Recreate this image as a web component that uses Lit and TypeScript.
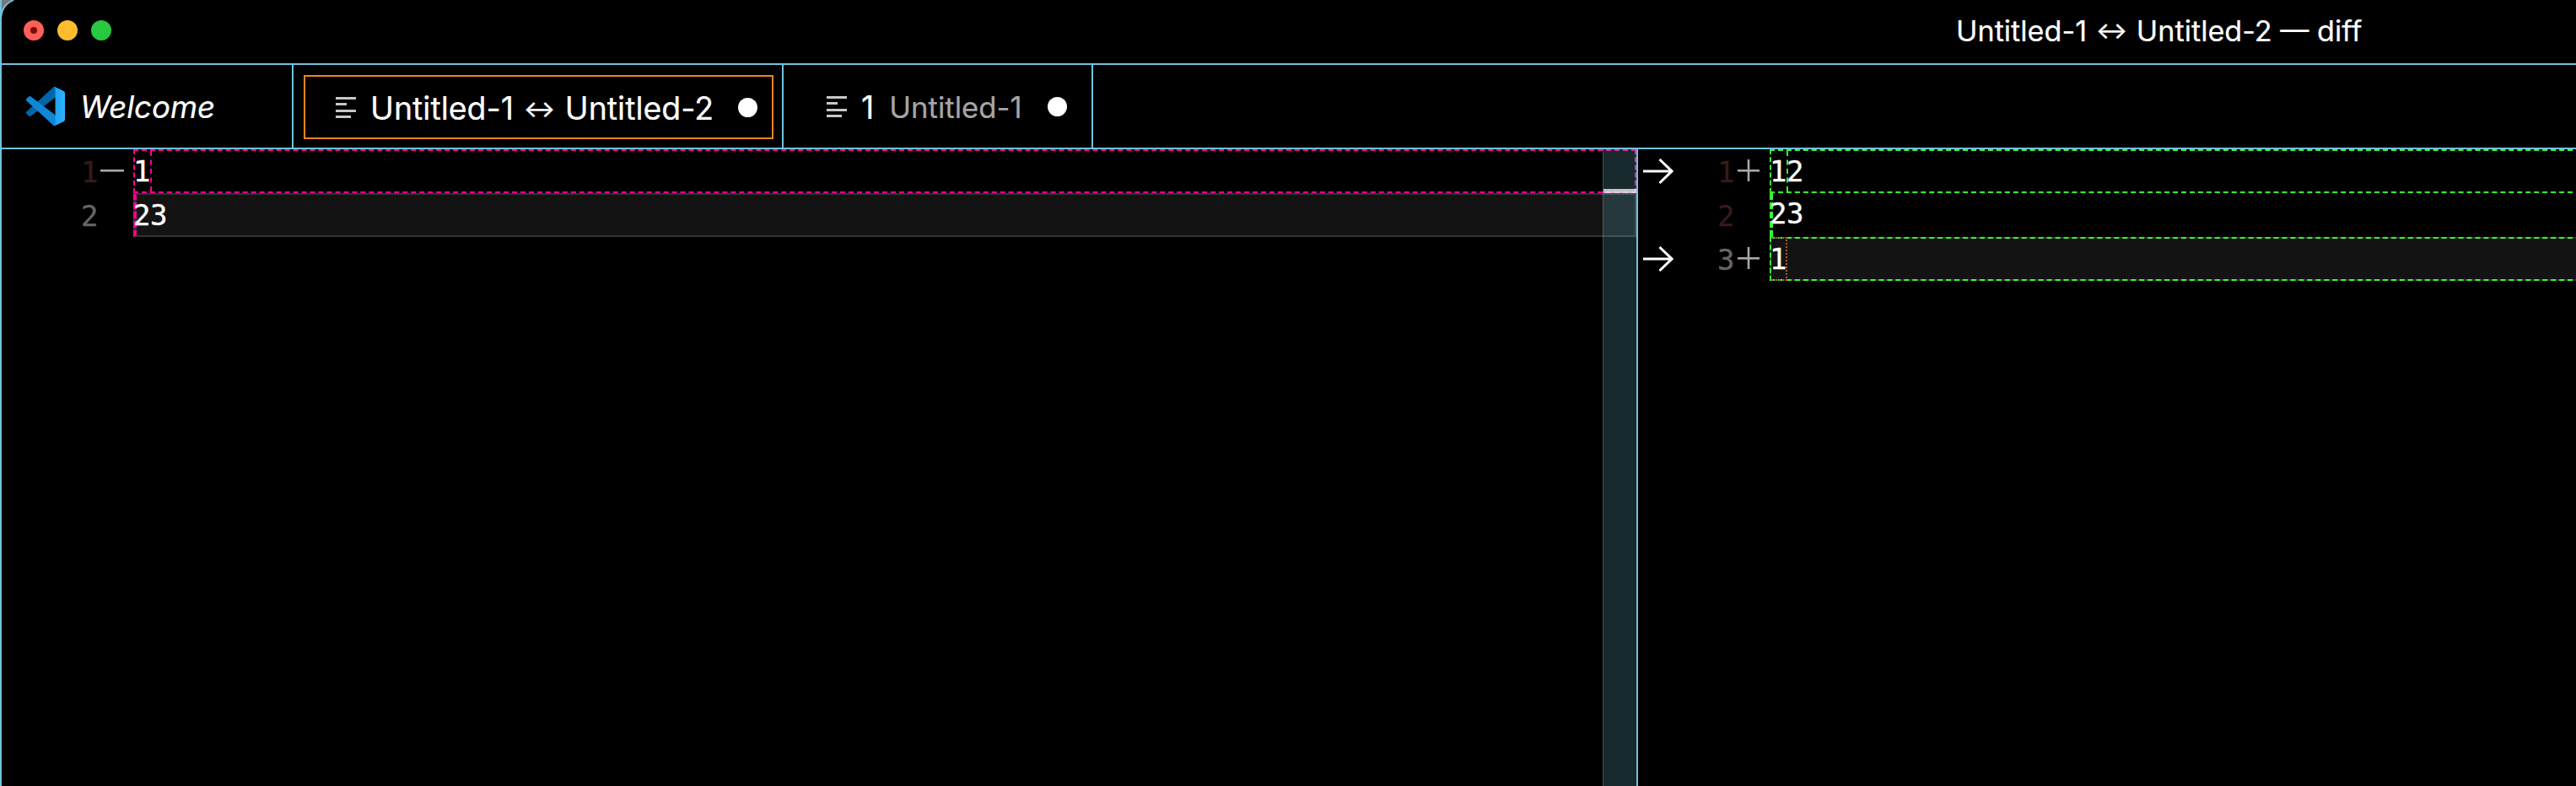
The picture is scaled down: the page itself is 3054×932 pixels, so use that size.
import { LitElement, html, css } from "lit";
import { customElement } from "lit/decorators.js";

const fileIcon = html`<svg class="file" width="24" height="26" viewBox="0 0 24 26" fill="#c8c8c8">
  <rect x="0" y="1" width="24" height="3"></rect>
  <rect x="0" y="8" width="13" height="3"></rect>
  <rect x="0" y="16" width="24" height="3"></rect>
  <rect x="0" y="23" width="18" height="3"></rect>
</svg>`;

const arrow = html`<svg class="arrow" width="36" height="30" viewBox="0 0 36 30" fill="none" stroke="#fff" stroke-width="3">
  <path d="M0 15H34M19.5 1L34 15L19.5 29"></path>
</svg>`;

const minus = html`<svg class="sign" width="28" height="28" viewBox="0 0 28 28"><rect x="0" y="13" width="28" height="2.6" fill="#a8a8a8"></rect></svg>`;
const plus = html`<svg class="sign" width="28" height="28" viewBox="0 0 28 28" fill="#a8a8a8"><rect x="1" y="13" width="26" height="2.6"></rect><rect x="12.7" y="1" width="2.6" height="26"></rect></svg>`;

@customElement("app-root")
export class AppRoot extends LitElement {
  static styles = css`
    :host { display: block; width: 3054px; height: 932px; background: #000; overflow: hidden; }
    .window { position: relative; width: 3054px; height: 932px; background: #000; border-left: 2px solid #6fc3df; box-sizing: border-box; display: flex; flex-direction: column; color: #fff; overflow: hidden; }
    .corner { position: absolute; left: -2px; top: 0; }

    .titlebar { height: 77px; flex: none; box-sizing: border-box; border-bottom: 2px solid #6fc3df; display: flex; align-items: center; padding-left: 26px; }
    .lights { display: flex; gap: 16px; width: 2291px; flex: none; padding-bottom: 3px; }
    .light { width: 24px; height: 24px; border-radius: 50%; display: flex; align-items: center; justify-content: center; }
    .red { background: #ff5f57; }
    .red i { width: 8px; height: 8px; border-radius: 50%; background: #7d0a06; }
    .yellow { background: #febc2e; }
    .green { background: #28c840; }
    .title { font: 34.2px/1 Inter, sans-serif; white-space: nowrap; padding-bottom: 1px; -webkit-text-stroke: 0.2px #fff; }
    .lr { font-size: 28px; font-weight: 500; margin: 0 1px; vertical-align: 3px; }

    .tabs { height: 100px; flex: none; box-sizing: border-box; border-bottom: 2px solid #6fc3df; display: flex; align-items: stretch; font-family: Inter, sans-serif; -webkit-text-stroke: 0.2px currentColor; }
    .tab { box-sizing: border-box; border-right: 2px solid #6fc3df; display: flex; align-items: center; white-space: nowrap; font-size: 37.5px; }
    .welcome { width: 346px; padding-left: 29px; gap: 18px; font-style: italic; font-size: 36.6px; }
    .t2 { width: 581px; padding: 12px 10px 10px 12px; }
    .inner { flex: 1; height: 76px; box-sizing: border-box; border: 2px solid #f38518; display: flex; align-items: center; padding: 0 17px 0 36px; }
    .t3 { width: 367px; padding: 0 29px 0 51px; }
    .file { flex: none; margin-right: 17px; }
    .name { line-height: 1; padding-top: 3px; }
    .desc { font-size: 34.7px; color: #a6a6a6; margin-left: 18px; line-height: 1; padding-top: 3px; }
    .dot { width: 23px; height: 23px; border-radius: 50%; background: #fff; margin-left: auto; flex: none; }

    .editors { flex: 1; display: flex; min-height: 0; font: 34px/48px "DejaVu Sans Mono", monospace; letter-spacing: -0.47px; -webkit-text-stroke: 0.35px currentColor; }
    .pane { position: relative; display: flex; flex-direction: column; }
    .left { flex: none; box-sizing: border-box; border-right: 2px solid #6fc3df; width: 1940px; }
    .right { flex: 1; min-width: 0; }
    .row { display: flex; height: 52px; flex: none; }
    .gutter { flex: none; display: flex; align-items: center; position: relative; width: 156px; box-sizing: border-box; }
    .left .gutter { padding-left: 94px; }
    .right .gutter { padding-left: 6px; }
    .arrow { flex: none; width: 36px; }
    .slot { flex: none; width: 36px; }
    .num { width: 20px; flex: none; color: #371a1a; line-height: 52px; margin-top: 1px; }
    .num.active { color: #666; }
    .right .num { margin-left: 52px; }
    .sign { flex: none; margin-left: 3px; margin-top: -3px; }
    .code { flex: 1; min-width: 0; box-sizing: border-box; display: flex; line-height: 48px; }
    .txt { display: block; margin-left: -2px; }
    .right .code { margin-right: -6px; }

    .del { border: 2px dashed #ff008f; }
    .del-hl { border-style: solid; border-color: #333; border-width: 2px; border-left: 4px dashed #ff008f; background: linear-gradient(#131313, #131313) padding-box, #333 border-box; }
    .del-hl .txt, .ins-thick .txt { margin-left: -4px; }
    .ins { border: 2px dashed #33ff2e; }
    .ins-hl { border: 2px dashed #33ff2e; background: linear-gradient(#131313, #131313) padding-box, #333 border-box; }
    .ins-thick { border-left: 4px dashed #33ff2e; }
    .char { display: block; height: 48px; width: 18px; flex: none; box-sizing: content-box; }
    .mark-del { border-right: 2px dashed #ff008f; }
    .mark-ins { border-right: 2px dashed #33ff2e; }
    .mark-sel { width: 17px; border-right: 2px dotted #a55c2c; border-top: 2px dotted #a55c2c; border-bottom: 2px dotted #a55c2c; margin-top: -2px; }
    .tail { display: block; margin-left: -2px; }

    .scroll { position: absolute; top: 0; bottom: 0; left: 1898px; width: 40px; box-sizing: border-box; background: rgba(120, 200, 220, 0.21); border-left: 1px solid rgba(255, 255, 255, 0.18); }
    .thumb { position: absolute; left: 0; right: 0; top: 47px; height: 5px; background: rgba(255, 255, 255, 0.72); }
  `;

  render() {
    return html`<div class="window">
      <div class="titlebar">
        <div class="lights">
          <div class="light red"><i></i></div>
          <div class="light yellow"></div>
          <div class="light green"></div>
        </div>
        <div class="title">Untitled-1 <span class="lr">↔</span> Untitled-2 — diff</div>
      </div>
      <div class="tabs">
        <div class="tab welcome">
          <svg width="46" height="46" viewBox="0 0 100 100" style="flex:none">
            <defs><linearGradient id="g" x1="0" y1="0" x2="1" y2="0"><stop offset="0" stop-color="#1f9cf0"></stop><stop offset="1" stop-color="#2cb4ff"></stop></linearGradient></defs>
            <path fill="#0065a9" d="M96.46 10.8 75.86.9a6.23 6.23 0 0 0-7.1 1.2L1.3 63.8a4.16 4.16 0 0 0 0 6.16l5.51 5.01a4.17 4.17 0 0 0 5.32.23L93.4 13.6c2.7-2.1 6.6-.15 6.6 3.27v-.24a6.25 6.25 0 0 0-3.54-5.83z"></path>
            <path fill="#0f86d6" d="M96.46 89.2 75.86 99.1a6.23 6.23 0 0 1-7.1-1.2L1.3 36.2a4.16 4.16 0 0 1 0-6.16l5.51-5.01a4.17 4.17 0 0 1 5.32-.23L93.4 86.4c2.7 2.1 6.6.15 6.6-3.27v.24a6.25 6.25 0 0 1-3.54 5.83z"></path>
            <path fill="url(#g)" d="M75.86 99.13a6.23 6.23 0 0 1-7.1-1.2c2.3 2.3 6.24.67 6.24-2.58V4.65c0-3.25-3.94-4.88-6.24-2.58a6.23 6.23 0 0 1 7.1-1.2L96.45 10.78A6.25 6.25 0 0 1 100 16.42v67.17a6.25 6.25 0 0 1-3.54 5.63L75.86 99.13z"></path>
          </svg>
          <span class="name">Welcome</span>
        </div>
        <div class="tab t2">
          <div class="inner">${fileIcon}<span class="name">Untitled-1 <span class="lr">↔</span> Untitled-2</span><span class="dot"></span></div>
        </div>
        <div class="tab t3">${fileIcon}<span class="name">1</span><span class="desc">Untitled-1</span><span class="dot"></span></div>
      </div>
      <div class="editors">
        <div class="pane left">
          <div class="row">
            <div class="gutter"><span class="num">1</span>${minus}</div>
            <div class="code del"><span class="char mark-del"><span class="txt">1</span></span></div>
          </div>
          <div class="row">
            <div class="gutter"><span class="num active">2</span></div>
            <div class="code del-hl"><span class="txt">23</span></div>
          </div>
          <div class="scroll"><div class="thumb"></div></div>
        </div>
        <div class="pane right">
          <div class="row">
            <div class="gutter">${arrow}<span class="num">1</span>${plus}</div>
            <div class="code ins"><span class="char mark-ins"><span class="txt">1</span></span><span class="tail">2</span></div>
          </div>
          <div class="row">
            <div class="gutter"><span class="slot"></span><span class="num">2</span></div>
            <div class="code ins-thick"><span class="txt">23</span></div>
          </div>
          <div class="row">
            <div class="gutter">${arrow}<span class="num active">3</span>${plus}</div>
            <div class="code ins-hl"><span class="char mark-sel"><span class="txt">1</span></span></div>
          </div>
        </div>
      </div>
      <svg class="corner" width="24" height="24" viewBox="0 0 24 24">
        <path d="M0 0H16C7 2 2 9 1 24H0Z" fill="#777"></path>
        <path d="M1 24C1 12 6 4 16 0" fill="none" stroke="#6fc3df" stroke-width="2"></path>
      </svg>
    </div>`;
  }
}
